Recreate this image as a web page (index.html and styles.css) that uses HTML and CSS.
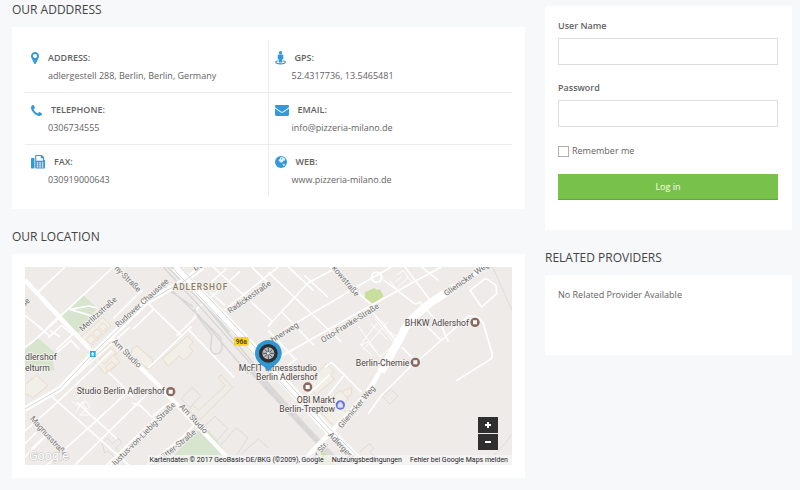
FILE: index.html
```html
<!DOCTYPE html>
<html lang="en">
<head>
<meta charset="utf-8">
<title>Provider</title>
<link rel="stylesheet" href="styles.css">
</head>
<body>
<div class="page">
  <main>
    <h2 class="heading">OUR ADDDRESS</h2>
    <section class="card">
      <dl class="contact">
        <div class="cell">
          <dt><svg width="8" height="12" viewBox="0 128 1024 1536"><path d="M768 640q0-106-75-181t-181-75-181 75-75 181 75 181 181 75 181-75 75-181zm256 0q0 109-33 179l-364 774q-16 33-47.500 52t-67.500 19-67.500-19-46.500-52l-365-774q-33-70-33-179 0-212 150-362t362-150 362 150 150 362z"/></svg>ADDRESS:</dt>
          <dd>adlergestell 288, Berlin, Berlin, Germany</dd>
        </div>
        <div class="cell">
          <dt><svg width="11" height="14" viewBox="0 0 11 14"><circle cx="5.500" cy="1.700" r="1.700"/><path d="M3.500 3.600h4c.5 0 .8.300.8.800v3.400l-1 .6v3H3.700v-3l-1-.6V4.400c0-.5.300-.8.800-.8z"/><path d="M2.800 9.800C1.400 10 .7 10.500.7 11.100c0 1 2 1.800 4.800 1.800s4.800-.8 4.800-1.800c0-.6-.7-1.100-2.100-1.300" fill="none" stroke="#3498db" stroke-width="1.200"/></svg>GPS:</dt>
          <dd>52.4317736, 13.5465481</dd>
        </div>
        <div class="cell">
          <dt><svg width="11" height="11" viewBox="0 128 1408 1408"><path d="M1408 1240q0 27-10 70.500t-21 68.500q-21 50-122 106-94 51-186 51-27 0-53-3.500t-57.500-12.500-47-14.500-55.500-20.500-49-18q-98-35-175-83-127-79-264-216t-216-264q-48-77-83-175-3-9-18-49t-20.500-55.500-14.500-47-12.500-57.500-3.500-53q0-92 51-186 56-101 106-122 25-11 68.500-21t70.500-10q14 0 21 3 18 6 53 76 11 19 30 54t35 63.500 31 53.500q3 4 17.500 25t21.500 35.500 7 28.500q0 20-28.500 50t-62 55-62 53-28.500 46q0 9 5 22.500t8.500 20.500 14 24 11.500 19q76 137 174 235t235 174q2 1 19 11.500t24 14 20.500 8.500 22.500 5q18 0 46-28.500t53-62 55-62 50-28.500q14 0 28.500 7t35.500 21.500 25 17.500q25 15 53.500 31t63.500 35 54 30q70 35 76 53 3 7 3 21z"/></svg>TELEPHONE:</dt>
          <dd>0306734555</dd>
        </div>
        <div class="cell">
          <dt><svg width="14" height="11" viewBox="0 0 14 11"><path d="M0 1.200C0 .5.500 0 1.200 0h11.600c.7 0 1.200.5 1.200 1.200 0 .9-.6 1.600-1.300 2.100L8.500 6.200c-.9.700-2.100.7-3 0L1.300 3.300C.6 2.800 0 2.100 0 1.200z"/><path d="M0 3.500l5 3.500c1.300.9 2.700.9 4 0l5-3.500v6.300c0 .7-.5 1.200-1.200 1.200H1.200C.5 11 0 10.500 0 9.800z"/></svg>EMAIL:</dt>
          <dd>info@pizzeria-milano.de</dd>
        </div>
        <div class="cell">
          <dt><svg width="14" height="14" viewBox="0 0 14 14"><path d="M1 3h1.500c.6 0 1 .4 1 1v8.500c0 .6-.4 1-1 1H1c-.6 0-1-.4-1-1V4c0-.6.400-1 1-1z"/><path fill-rule="evenodd" d="M4.200 1c0-.6.400-1 1-1h5.600L13 2.200v2.400c.6.200 1 .7 1 1.200v6.700c0 .6-.4 1-1 1H5.200c-.6 0-1-.4-1-1zM5.300 1.100v4.700h6.600V3.200H9.800V1.100zM5.800 7.200v1.200h1.500V7.200zm2.500 0v1.200h1.500V7.200zm2.500 0v1.200h1.500V7.200zM5.800 9.200v1.200h1.500V9.200zm2.500 0v1.200h1.500V9.200zm2.500 0v1.200h1.500V9.200zm-5 2v1.200h1.500v-1.200zm2.500 0v1.200h1.500v-1.200zm2.500 0v1.200h1.500v-1.200z"/></svg>FAX:</dt>
          <dd>030919000643</dd>
        </div>
        <div class="cell">
          <dt><svg width="12" height="12" viewBox="0 0 12 12"><circle cx="6" cy="6" r="6"/><path fill="#fff" d="M5 1.500l2.400-.6 2 1 .9 1.500-.8 1.300-1.200 0-.8 1.600-1.500.5-.8-.7-1.500-1 .2-1.500L5 2.900zM7.700 7.700l1.500.3 1 .4-1.400 1.500-.8-.5z" opacity=".85"/><path d="M6.200 2l1.300.8-1 1z"/></svg>WEB:</dt>
          <dd>www.pizzeria-milano.de</dd>
        </div>
      </dl>
    </section>

    <h2 class="heading">OUR LOCATION</h2>
    <section class="card">
      <div class="map">
        <svg class="map-art" viewBox="0 0 1461 594" role="img" aria-label="Map of Berlin Adlershof">
          <rect width="1461" height="594" fill="#eeebe8"/>
          <!-- parks -->
          <g fill="#d7e5cf">
            <path d="M175 85l42 38-58 76-52-49zM38 212l55 48-10 20 5 30H0V245zM517 491l35 0 55 70-5 33H418z"/>
            <path d="M1020 76l28-13 8 6 8-2 12 21-30 22-26-17zM888 560l14-8 22 20 8 22h-48z" fill="#c9dd9c"/>
          </g>
          <!-- building outlines -->
          <g fill="#f2eee8" stroke="#e9dbc8" stroke-width="3">
            <path d="M165 212l68-60 25 25-62 64zM183 218l15-15 14 14-15 15zM202 199l14-14 14 14-14 14zM220 180l14-14 14 14-14 14z"/>
            <path d="M203 276l62-56 26 24-23 22 16 20-45 34zM222 276l36-34 15 15-35 34zM240 302l20-18 14 12-20 19z"/>
            <path d="M322 245l14-8 48 42-2 18-13 9-50-40zM412 275l76-68 16 18-12 14 13 13-28 28-14-14-33 32z"/>
            <path d="M0 353l35-28 34 31-44 35-25-12zM843 355l60-64 24 22-10 12 11 12-54 45zM950 374l28-12 3 20-28 15z"/>
            <path d="M885 430l60-60 25 25-22 24 17 18-33 42-22-18z"/>
          </g>
          <path d="M492 430l33 28 98-97-35-37-9 8 22 24-80 74-18-16z" fill="none" stroke="#e9dbc8" stroke-width="3"/>
          <g fill="none" stroke="#dedbd8" stroke-width="3">
            <path d="M469 395l32-34 26 25-33 36zM520 495l50-47 38 36-45 53zM587 535l46-52 36 29-35 53M650 560l50-44 32 28M231 528l16-15 16 17 18-16 10 12-19 18 22 22-17 15-28-30-10 7zM1073 389l24-23 22 21-24 24zM1004 555l30-25 12 14-11 10 28 30"/>
          </g>
          <!-- side streets -->
          <g class="street thin">
            <path d="M120 0L38 76M265 0L105 149M195 241L60 112M0 242L38 212l68-63M217 123l-25-6-57 10 66 20M38 212l60-60M93 248l50-45-33-28-40 37M75 190l30 20M93 260l45-40 25 28M0 145l50 40M72 205l-42-35"/>
            <path d="M350 70l-85 85M262 0l90 75M388 125l-65 62M365 105l103 100M500 178l-130 125M490 187l138 145M604 5l-78 70M539 108l106-95M564 0l180 165M455 206l60-60 0-20 28-25M680 0l54 52M597 130L760 0M555 75l45 40"/>
            <path d="M80 388L320 602M115 360l200-180M155 405l120 110M0 492l90-80 170-160M65 594l130-115 130-120M150 594l185-182 50-50M245 594l145-140M320 408l26 8 35 34 35-30 30-20M368 594l105-85 40-40M455 405L255 594M0 570l60-60M250 315l75 75M20 545l45-42 60 55M0 530l35-35"/>
          </g>
          <path d="M150 400l40-38M140 402l23 18 18-20 15 18-32 26 28 0-20-40-20 32" class="street fine"/>
          <g class="street thin">
            <path d="M729 15l220 210M729 178l120-130 90-48M790 0l75 70M915 0l120 110M838 25l70 65M729 290l300-170 220-120M729 230l50-42 250-148 70-40M867 235L770 135M729 190l80 85"/>
            <path d="M1075 38l95 73 15-5 15 18 48 50 22 50M1140 0l80 105M1190 0l50 40M1030 120l90 110M1250 222l-60-60"/>
            <path d="M815 275l-80 60M900 300l20-14 90 90M905 390l56-70M849 383l65-60M1170 285l-105 105-35 50M1175 285l155-137q12-3 28 2l15 15 28 92q4 12-5 20l-103 65M1130 240l50 50M1380 35l-45 35 35 50 45-40-2-25-25-18z"/>
          </g>
          <g class="street fine">
            <path d="M1092 38l22 28 36-36-15-20-20 14M1110 45l20-15M1145 30l18 15-35 20M985 155l80 115 50-45-45-65M1005 235l50-65M1015 248l75-85M1040 265l-32-30 18-10 32 35M1038 170l50 48M1050 155l55 70 20-10-30-20"/>
          </g>
          <circle cx="1055" cy="31" r="15" class="street mid"/>
          <!-- rail tracks -->
          <g fill="none" stroke="#d5d5d6" stroke-width="4">
            <path d="M415 0l120 130L900 540l55 54M428 0l105 108 160 190M440 0l120 125M452 0l160 195M405 50l100 70M440 70l80 75 150 175M510 125l6 20 45 60-4 35q0 22 18 20t16-24l-5-25-50-50"/>
            <path d="M680 310L945 594" stroke-width="18" stroke="#dbdad9"/>
            <path d="M720 358L905 552" stroke-width="8" stroke-dasharray="35 9"/>
            <path d="M1403 0l58 130M1461 500q-40 65-100 94" stroke-width="2"/>
          </g>
          <!-- main roads -->
          <g class="street">
            <path d="M0 40l200 213" stroke-width="13"/>
            <path d="M258 215l145 142 70 74 125 130 25 33" stroke-width="13"/>
            <path d="M0 426L104 366 204 260 365 105l120-68 48-37" stroke-width="17"/>
            <path d="M1381 0l-160 108-48 36q-30 26-45 65l-64 106q-30 55-74 105L850 565l-20 29" stroke-width="14"/>
            <path d="M1290 60l-75 48-42 36q-30 26-45 65l-60 105" stroke-width="24"/>
            <path d="M450 0l250 258L910 490l120 120" stroke-width="26"/>
          </g>
          <path d="M0 426L104 366 204 260 365 105l120-68 48-37" class="centre"/>
          <path d="M465 0l245 262 210 230 105 102M440 0l280 296 280 298" class="centre"/>
          <!-- street names -->
          <g class="road-name">
            <text transform="translate(172 194) rotate(-42)">Merlitzstraße</text>
            <text transform="translate(280 182) rotate(-42)">Rudower Chaussee</text>
            <text transform="translate(267 5) rotate(45)">ny-Straße</text>
            <text transform="translate(-4 121) rotate(-42)">ße</text>
            <text transform="translate(260 226) rotate(44)">Am Studio</text>
            <text transform="translate(462 420) rotate(47)">Am Studio</text>
            <text transform="translate(14 456) rotate(48)">Magnusstraße</text>
            <text transform="translate(266 602) rotate(-45)">Justus-von-Liebig-Straße</text>
            <text transform="translate(382 606) rotate(-39)">ellstätter-Straße</text>
            <text transform="translate(615 140) rotate(-35)">Radickestraße</text>
            <text transform="translate(510 12) rotate(-28)">Do</text>
            <text transform="translate(744 227) rotate(-32)">hnerweg</text>
            <text transform="translate(894 228) rotate(-32)">Otto-Franke-Straße</text>
            <text transform="translate(920 4) rotate(50)">kowstraße</text>
            <text transform="translate(1264 88) rotate(-35)">Glienicker Weg</text>
            <text transform="translate(950 485) rotate(-50)">Glienicker Weg</text>
            <text transform="translate(872 580) rotate(-52)">er Str.</text>
            <text transform="translate(908 505) rotate(47)">Adlergestell</text>
          </g>
          <text x="443" y="69" class="district">ADLERSHOF</text>
          <rect x="627" y="210" width="44" height="26" rx="3" fill="#f8d12c"/>
          <text x="649" y="231" class="route">96a</text>
          <rect x="195" y="252" width="17" height="18" fill="#29abea"/>
          <path d="M203 255l5 6-2 0v5h-6v-5h-2z" fill="#fff"/>
          <!-- places -->
          <g class="place">
            <text x="0" y="278">dlershof</text>
            <text x="0" y="313">elturm</text>
            <text x="155" y="382">Studio Berlin Adlershof</text>
            <text x="641" y="313">McFIT Fitnessstudio</text>
            <text x="693" y="340">Berlin Adlershof</text>
            <text x="930" y="408" text-anchor="end">OBI Markt</text>
            <text x="930" y="436" text-anchor="end">Berlin-Treptow</text>
            <text x="1153" y="296" text-anchor="end">Berlin-Chemie</text>
            <text x="1332" y="176" text-anchor="end">BHKW Adlershof</text>
          </g>
          <g fill="#8b6960">
            <circle cx="437" cy="374" r="14"/><circle cx="848" cy="360" r="14"/><circle cx="1171" cy="286" r="14"/><circle cx="1350" cy="166" r="14"/>
          </g>
          <g fill="#fff">
            <path d="M431 368h12v12h-12zM842 354h12v12h-12zM1165 280h12v12h-12zM1344 160h12v12h-12z"/>
          </g>
          <circle cx="946" cy="414" r="14" fill="#6572dc"/>
          <path d="M939 411h14v10h-14zM942 411v-3q4-6 8 0v3" fill="#dfe2ff" stroke="#dfe2ff" stroke-width="2"/>
          <!-- pin -->
          <path d="M730 314q-9-14-24-23a40 40 0 1 1 48 0q-15 9-24 23z" fill="#3097d3"/>
          <circle cx="730" cy="259" r="28" fill="#2c2d2f"/>
          <circle cx="730" cy="259" r="18" fill="#b9bbbd"/>
          <path d="M730 242v34M713 259h34M719 247l23 24M742 248l-24 22" stroke="#55585b" stroke-width="3"/>
          <circle cx="730" cy="259" r="4" fill="#eee"/>
          <text x="12" y="578" class="brand">Google</text>
        </svg>
        <div class="map-zoom">
          <button type="button" aria-label="Zoom in"><svg width="6" height="6" viewBox="0 0 6 6"><path d="M2 0h2v2h2v2H4v2H2V4H0V2h2z"/></svg></button>
          <button type="button" aria-label="Zoom out"><svg width="6" height="6" viewBox="0 0 6 6"><path d="M0 2h6v2H0z"/></svg></button>
        </div>
        <div class="map-legal">
          <span>Kartendaten © 2017 GeoBasis-DE/BKG (©2009), Google</span>
          <a href="#">Nutzungsbedingungen</a>
          <a href="#">Fehler bei Google Maps melden</a>
        </div>
      </div>
    </section>
  </main>

  <aside>
    <form class="card login">
      <label class="field-label" for="user">User Name</label>
      <input class="field" id="user" type="text">
      <label class="field-label" for="pass">Password</label>
      <input class="field" id="pass" type="password">
      <div class="remember"><input type="checkbox" id="remember"><label for="remember">Remember me</label></div>
      <button class="submit" type="submit">Log in</button>
    </form>
    <h2 class="heading">RELATED PROVIDERS</h2>
    <section class="card related"><p>No Related Provider Available</p></section>
  </aside>
</div>
</body>
</html>
```
FILE: styles.css
```css
* { box-sizing: border-box; }

body {
  margin: 0;
  background: #f7f8fa;
  color: #636363;
  font: 9px/18px "Open Sans", "Noto Sans", sans-serif;
}

.page {
  display: grid;
  grid-template-columns: 513fr 247fr;
  gap: 20px;
  align-items: start;
  padding: 0 8px 12px 12px;
}

.heading {
  margin: 0;
  padding-bottom: 8px;
  color: #444;
  font-size: 12px;
  font-weight: 400;
  line-height: 19px;
}

.card {
  padding: 13px;
  margin-bottom: 18px;
  background: #fff;
}

.contact {
  display: grid;
  grid-template-columns: 1fr 1fr;
  margin: 0;
}

.cell {
  height: 52px;
  padding: 8px 6px;
  border-top: 1px solid #ececec;
}
.cell:nth-child(odd) { border-right: 1px solid #ececec; }
.cell:nth-child(-n+2) { border-top-color: transparent; }

.cell dt {
  display: flex;
  align-items: center;
  gap: 9px;
  height: 18px;
  font-weight: 600;
}
.cell dt svg { fill: #3498db; }
.cell dd { margin: 0 0 0 17px; }

.map {
  position: relative;
  overflow: hidden;
}
.map-art { display: block; width: 100%; }
.map-art text { font-family: Roboto, sans-serif; }

.street { fill: none; stroke: #fff; stroke-linejoin: round; }
.fine { stroke-width: 3px; }
.thin { stroke-width: 5px; }
.mid { stroke-width: 6px; }
.centre { fill: none; stroke: #d3d4d5; stroke-width: 3px; }

.road-name { fill: #747474; font-size: 24px; }
.road-name, .place, .district {
  paint-order: stroke;
  stroke: #f5f3f1;
  stroke-width: 5px;
}
.place { fill: #4e4544; font-size: 26px; }
.district { fill: #8a7a62; font-size: 25px; font-weight: 500; letter-spacing: 3px; }
.route { fill: #5a4a10; font-size: 20px; font-weight: 700; text-anchor: middle; }
.brand {
  fill: #fff;
  font-size: 38px;
  paint-order: stroke;
  stroke: #c4c2c0;
  stroke-width: 3px;
}

.map-zoom {
  position: absolute;
  right: 14px;
  bottom: 15px;
  display: grid;
  gap: 1px;
}
.map-zoom button {
  display: grid;
  place-items: center;
  width: 20px;
  height: 16px;
  padding: 0;
  border: 0;
  background: #2f2f2f;
}
.map-zoom svg { fill: #fff; }

.map-legal {
  position: absolute;
  right: 0;
  bottom: 0;
  display: flex;
  gap: 8px;
  padding: 0 4px 0 2px;
  background: rgba(245, 245, 245, 0.8);
  color: #222;
  font: 7px/10px Roboto, sans-serif;
}
.map-legal a { color: inherit; text-decoration: none; }

.login {
  display: grid;
  margin-top: 6px;
  padding: 13px 14px 30px 13px;
}
.field-label {
  padding-bottom: 6px;
  line-height: 13px;
  font-weight: 600;
}
.field {
  width: 100%;
  height: 27px;
  margin-bottom: 16px;
  border: 1px solid #ddd;
  background: #fff;
  font: inherit;
}
.remember {
  display: flex;
  align-items: center;
  gap: 3px;
  margin-bottom: 15px;
  line-height: 16px;
}
.remember input {
  appearance: none;
  width: 11px;
  height: 11px;
  margin: 0;
  border: 1px solid #b0b0b0;
  background: #fff;
}
.submit {
  height: 26px;
  border: 0;
  border-bottom: 1px solid #5fa63a;
  background: #78c14b;
  color: #fff;
  font: inherit;
}

.related { min-height: 80px; }
.related p { margin: 0; line-height: 14px; }
```
